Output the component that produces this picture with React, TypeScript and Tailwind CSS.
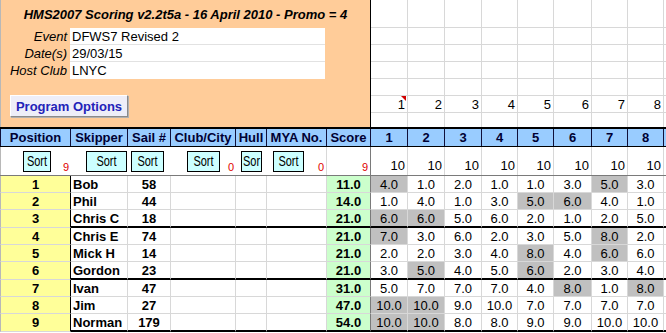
import React from 'react';

const fieldCols = ['w-[71px]', 'w-[57px]', 'w-[43px]', 'w-[65px]', 'w-[31px]', 'w-[60px]', 'w-[44px]'];
const raceCols = ['w-[37px]', 'w-[37px]', 'w-[37px]', 'w-[36px]', 'w-[36px]', 'w-[38px]', 'w-[36px]', 'w-[36px]'];

const headers = ['Position', 'Skipper', 'Sail #', 'Club/City', 'Hull', 'MYA No.', 'Score'];

type Row = {
	pos: number;
	skipper: string;
	sail: number;
	score: string;
	races: string[];
	discards: number[];
};

const rows: Row[] = [
	{ pos: 1, skipper: 'Bob', sail: 58, score: '11.0', races: ['4.0', '1.0', '2.0', '1.0', '1.0', '3.0', '5.0', '3.0'], discards: [0, 6] },
	{ pos: 2, skipper: 'Phil', sail: 44, score: '14.0', races: ['1.0', '4.0', '1.0', '3.0', '5.0', '6.0', '4.0', '1.0'], discards: [4, 5] },
	{ pos: 3, skipper: 'Chris C', sail: 18, score: '21.0', races: ['6.0', '6.0', '5.0', '6.0', '2.0', '1.0', '2.0', '5.0'], discards: [0, 1] },
	{ pos: 4, skipper: 'Chris E', sail: 74, score: '21.0', races: ['7.0', '3.0', '6.0', '2.0', '3.0', '5.0', '8.0', '2.0'], discards: [0, 6] },
	{ pos: 5, skipper: 'Mick H', sail: 14, score: '21.0', races: ['2.0', '2.0', '3.0', '4.0', '8.0', '4.0', '6.0', '6.0'], discards: [4, 6] },
	{ pos: 6, skipper: 'Gordon', sail: 23, score: '21.0', races: ['3.0', '5.0', '4.0', '5.0', '6.0', '2.0', '3.0', '4.0'], discards: [1, 4] },
	{ pos: 7, skipper: 'Ivan', sail: 47, score: '31.0', races: ['5.0', '7.0', '7.0', '7.0', '4.0', '8.0', '1.0', '8.0'], discards: [5, 7] },
	{ pos: 8, skipper: 'Jim', sail: 27, score: '47.0', races: ['10.0', '10.0', '9.0', '10.0', '7.0', '7.0', '7.0', '7.0'], discards: [0, 1] },
	{ pos: 9, skipper: 'Norman', sail: 179, score: '54.0', races: ['10.0', '10.0', '8.0', '8.0', '9.0', '9.0', '10.0', '10.0'], discards: [0, 1] }
];

const SortButton = ({ className, label = 'Sort' }: { className: string; label?: string }) => (
	<div
		className={`absolute top-[4px] h-[21px] flex items-center justify-center overflow-hidden border border-black bg-[#ccffff] text-[11px] text-black ${className}`}
	>
		<span className="inline-block scale-y-[1.25] whitespace-nowrap">{label}</span>
	</div>
);

const RedCount = ({ value }: { value: string }) => (
	<span className="absolute right-[2px] bottom-[1px] text-[11px] leading-[13px] text-[#e00000]">{value}</span>
);

export default function App() {
	return (
		<div
			className="w-[666px] h-[333px] overflow-hidden bg-white text-black text-[13px] leading-none"
			style={{ fontFamily: '"Liberation Sans", Arial, sans-serif' }}
		>
			{/* top banner */}
			<div className="flex h-[129px] border-b-2 border-black">
				<div className="w-[371px] shrink-0 flex flex-col bg-[#ffcc99] border-l border-l-[#b8b8b8] border-r border-r-black">
					<div className="h-[28px] flex items-center justify-center font-bold italic">
						HMS2007 Scoring v2.2t5a - 16 April 2010 - Promo = 4
					</div>
					{[
						['Event', 'DFWS7 Revised 2'],
						['Date(s)', '29/03/15'],
						['Host Club', 'LNYC']
					].map(([label, value], i) => (
						<div key={label} className="flex h-[17px]">
							<div className="w-[69px] pr-[3px] flex items-center justify-end italic">{label}</div>
							<div
								className={`w-[255px] pl-[2px] flex items-center bg-white ${i < 2 ? 'border-b border-[#e2e2e2]' : ''}`}
							>
								{value}
							</div>
						</div>
					))}
					<div className="mt-[16px] ml-[9px] w-[118px] h-[22px] flex items-center justify-center bg-[#eeeef8] border border-t-white border-l-white border-r-[#8a8a8a] border-b-[#8a8a8a] shadow-[1px_1px_0_#b0b0b0] font-bold text-[#2323b8]">
						Program Options
					</div>
				</div>
				<div className="flex-1 flex flex-col">
					{['h-[28px]', 'h-[17px]', 'h-[17px]', 'h-[17px]', 'h-[17px]', 'h-[17px]', 'flex-1'].map((h, r) => (
						<div key={r} className={`flex ${h} ${r < 6 ? 'border-b border-[#d8d8d8]' : ''}`}>
							{raceCols.map((w, c) => (
								<div
									key={c}
									className={`relative ${w} shrink-0 border-r border-[#d8d8d8] flex items-end justify-end pr-[2px] pb-[1px]`}
								>
									{r === 5 && c + 1}
									{r === 5 && c === 0 && (
										<div className="absolute top-0 right-[1px] w-0 h-0 border-l-[5px] border-l-transparent border-t-[5px] border-t-[#d00000]" />
									)}
								</div>
							))}
						</div>
					))}
				</div>
			</div>

			{/* header row */}
			<div className="flex h-[18px] border-b border-black bg-[#99ccff] font-bold text-[#000033]">
				{headers.map((h, i) => (
					<div
						key={h}
						className={`${fieldCols[i]} shrink-0 flex items-center justify-center whitespace-nowrap border-r border-[#10103a] ${i === 0 ? 'border-l' : ''}`}
					>
						{h}
					</div>
				))}
				{raceCols.map((w, i) => (
					<div key={i} className={`${w} shrink-0 flex items-center justify-center border-r border-[#10103a]`}>
						{i + 1}
					</div>
				))}
				<div className="flex-1" />
			</div>

			{/* sort row */}
			<div className="flex h-[29px] border-b border-[#7a7a7a]">
				<div className={`${fieldCols[0]} relative shrink-0 border-l border-[#b8b8b8]`}>
					<SortButton className="left-[22px] w-[28px]" />
					<RedCount value="9" />
				</div>
				<div className={`${fieldCols[1]} relative shrink-0`}>
					<SortButton className="left-[15px] w-[41px]" />
				</div>
				<div className={`${fieldCols[2]} relative shrink-0`}>
					<SortButton className="left-[3px] w-[33px]" />
				</div>
				<div className={`${fieldCols[3]} relative shrink-0`}>
					<SortButton className="left-[16px] w-[33px]" />
					<RedCount value="0" />
				</div>
				<div className={`${fieldCols[4]} relative shrink-0`}>
					<SortButton className="left-[5px] w-[21px]" label="Sor" />
				</div>
				<div className={`${fieldCols[5]} relative shrink-0 border-r border-[#d8d8d8]`}>
					<SortButton className="left-[6px] w-[31px]" />
					<RedCount value="0" />
				</div>
				<div className={`${fieldCols[6]} relative shrink-0 border-r border-[#7a7a7a]`}>
					<RedCount value="9" />
				</div>
				{raceCols.map((w, i) => (
					<div key={i} className={`${w} shrink-0 border-r border-[#d8d8d8] flex items-end justify-end pr-[2px] pb-[3px]`}>
						10
					</div>
				))}
				<div className="flex-1" />
			</div>

			{/* results */}
			{rows.map((row, idx) => {
				const groupEnd = idx % 3 === 2;
				const bottom = groupEnd ? 'border-b-2 border-b-black' : 'border-b border-b-[#d8d8d8]';
				return (
					<div key={row.pos} className={`flex ${groupEnd ? 'h-[18px]' : 'h-[17px]'}`}>
						<div
							className={`${fieldCols[0]} shrink-0 flex items-center justify-center font-bold bg-[#ffff99] border-l border-l-[#b8b8b8] border-r border-r-black border-b border-b-[#d8d8d8]`}
						>
							{row.pos}
						</div>
						<div className={`${fieldCols[1]} shrink-0 flex items-center pl-[2px] font-bold whitespace-nowrap border-r border-r-[#d8d8d8] ${bottom}`}>
							{row.skipper}
						</div>
						<div className={`${fieldCols[2]} shrink-0 flex items-center justify-center font-bold border-r border-r-[#d8d8d8] ${bottom}`}>
							{row.sail}
						</div>
						<div className={`${fieldCols[3]} shrink-0 border-r border-r-[#d8d8d8] ${bottom}`} />
						<div className={`${fieldCols[4]} shrink-0 border-r border-r-[#d8d8d8] ${bottom}`} />
						<div className={`${fieldCols[5]} shrink-0 border-r border-r-[#d8d8d8] ${bottom}`} />
						<div className={`${fieldCols[6]} shrink-0 flex items-center justify-center font-bold bg-[#ccffcc] border-r border-r-[#7a7a7a] ${bottom}`}>
							{row.score}
						</div>
						{row.races.map((v, i) => (
							<div
								key={i}
								className={`${raceCols[i]} shrink-0 flex items-center justify-center border-r border-r-[#d8d8d8] ${bottom} ${row.discards.includes(i) ? 'bg-[#c0c0c0]' : ''}`}
							>
								{v}
							</div>
						))}
						<div className={`flex-1 ${bottom}`} />
					</div>
				);
			})}
		</div>
	);
}
